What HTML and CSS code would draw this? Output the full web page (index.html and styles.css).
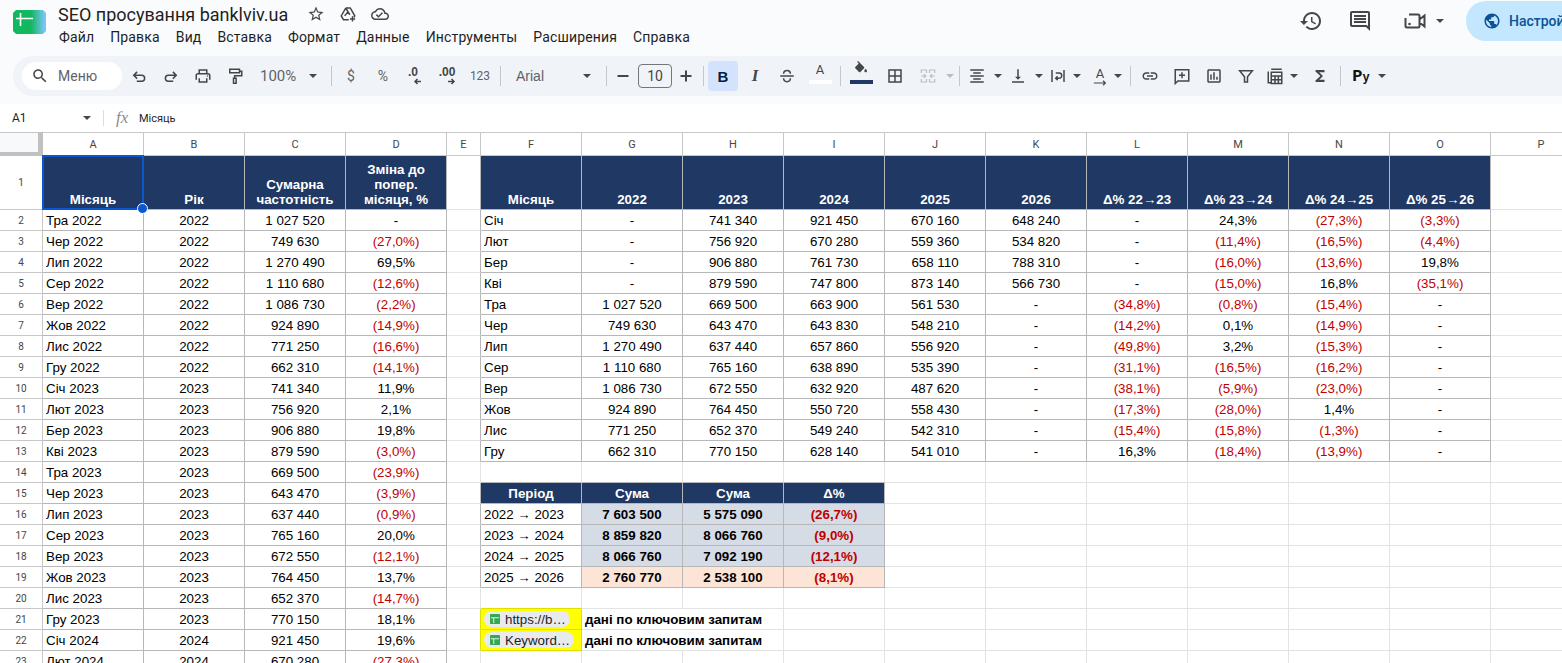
FILE: index.html
```html
<!DOCTYPE html>
<html lang="uk">
<head>
  <meta charset="UTF-8">
  <title>SEO просування banklviv.ua</title>
  <link rel="stylesheet" href="styles.css">
</head>
<body>
  <div class="top">
    <svg class="logo" viewBox="0 0 33 24">
      <defs><linearGradient id="lg" x1="0" x2="1" y1="0" y2="0"><stop offset="0.55" stop-color="#12b85f"/><stop offset="0.95" stop-color="#78c4f5"/></linearGradient></defs>
      <path d="M3 0h27l3 3v18l-3 3H3l-3-3V3z" fill="url(#lg)"/>
      <path d="M3 8.500h17M7.500 3v13" stroke="#fff" stroke-width="1.600" fill="none"/>
    </svg>
    <div class="doc">
      <div class="title-row">
        <span class="title">SEO просування banklviv.ua</span>
        <svg class="ti" viewBox="0 0 24 24"><path d="M22 9.24l-7.19-.62L12 2 9.19 8.63 2 9.24l5.46 4.73L5.82 21 12 17.27 18.18 21l-1.63-7.03L22 9.24zM12 15.4l-3.76 2.27 1-4.28-3.32-2.88 4.38-.38L12 6.1l1.71 4.04 4.38.38-3.32 2.88 1 4.28L12 15.4z"/></svg>
        <svg class="ti" viewBox="0 0 24 24"><path class="ln" d="M9 4h6l6 10.500-1 2M9 4L3 14.500l3 5h7M9 4l3 5M7.500 14.500l4.500-5.500 2.500 4"/><path class="ln" d="M18 15v7M14.500 18.500h7"/></svg>
        <svg class="ti" viewBox="0 0 24 24"><path d="M19.35 10.04C18.67 6.59 15.64 4 12 4 9.11 4 6.6 5.64 5.35 8.04 2.34 8.36 0 10.91 0 14c0 3.31 2.69 6 6 6h13c2.76 0 5-2.24 5-5 0-2.64-2.05-4.78-4.65-4.96zM19 18H6c-2.21 0-4-1.79-4-4 0-2.05 1.53-3.76 3.56-3.97l1.07-.11.5-.95C8.08 7.14 9.94 6 12 6c2.62 0 4.88 1.86 5.39 4.43l.3 1.5 1.53.11c1.56.1 2.78 1.41 2.78 2.96 0 1.65-1.35 3-3 3zm-9-3.82l-2.09-2.09L6.5 13.5 10 17l6.01-6.01-1.41-1.41z"/></svg>
      </div>
      <div class="menu">
        <span>Файл</span><span>Правка</span><span>Вид</span><span>Вставка</span><span>Формат</span><span>Данные</span><span>Инструменты</span><span>Расширения</span><span>Справка</span>
      </div>
    </div>
    <div class="actions">
      <svg class="hi first" viewBox="0 0 24 24"><path d="M13 3c-4.97 0-9 4.03-9 9H1l3.89 3.89.07.14L9 12H6c0-3.87 3.13-7 7-7s7 3.13 7 7-3.13 7-7 7c-1.93 0-3.68-.79-4.94-2.06l-1.42 1.42C8.27 19.99 10.51 21 13 21c4.97 0 9-4.03 9-9s-4.03-9-9-9zm-1 5v5l4.28 2.54.72-1.21-3.5-2.08V8H12z"/></svg>
      <svg class="hi second" viewBox="0 0 24 24"><path d="M21.99 4c0-1.1-.89-2-1.99-2H4c-1.1 0-2 .9-2 2v12c0 1.1.9 2 2 2h14l4 4-.01-18zM20 4v13.17L18.83 16H4V4h16zM6 12h12v2H6zm0-3h12v2H6zm0-3h12v2H6z"/></svg>
      <svg class="hi third" viewBox="0 0 24 24"><path class="ln" d="M6 5.500h9a1.500 1.500 0 0 1 1.500 1.500v10a1.500 1.500 0 0 1-1.500 1.500H4A1.500 1.500 0 0 1 2.500 17V9M16.500 10.500L21.500 6.500v11l-5-4"/><circle cx="6.500" cy="15" r="1.300"/></svg>
      <i class="caret video-caret"></i>
      <div class="share">
        <svg viewBox="0 0 24 24"><path d="M12 2C6.48 2 2 6.48 2 12s4.48 10 10 10 10-4.48 10-10S17.52 2 12 2zm-1 17.93c-3.95-.49-7-3.85-7-7.93 0-.62.08-1.21.21-1.79L9 15v1c0 1.1.9 2 2 2v1.93zm6.9-2.54c-.26-.81-1-1.39-1.9-1.39h-1v-3c0-.55-.45-1-1-1H8v-2h2c.55 0 1-.45 1-1V7h2c1.1 0 2-.9 2-2v-.41c2.93 1.19 5 4.06 5 7.41 0 2.08-.8 3.97-2.1 5.39z"/></svg>
        <span>Настройки</span>
      </div>
    </div>
  </div>

  <div class="toolbar">
    <div class="search">
      <svg viewBox="0 0 24 24"><path d="M15.500 14h-.79l-.28-.27C15.410 12.590 16 11.110 16 9.500 16 5.910 13.090 3 9.500 3S3 5.910 3 9.500 5.910 16 9.500 16c1.610 0 3.090-.59 4.230-1.570l.27.28v.79l5 4.990L20.490 19l-4.990-5zm-6 0C7.010 14 5 11.990 5 9.500S7.010 5 9.500 5 14 7.010 14 9.500 11.990 14 9.500 14z"/></svg>
      <span>Меню</span>
    </div>
    <div class="tool w32 ml1"><svg viewBox="0 0 24 24"><path class="ln" d="M9.500 6.500L5 11l4.500 4.500M5 11h10.500a4 4 0 0 1 0 8H9"/></svg></div>
    <div class="tool w32"><svg viewBox="0 0 24 24"><path class="ln" d="M14.500 6.500L19 11l-4.500 4.500M19 11H8.500a4 4 0 0 0 0 8H15"/></svg></div>
    <div class="tool w32"><svg viewBox="0 0 24 24"><path d="M19 8h-1V3H6v5H5c-1.660 0-3 1.340-3 3v6h4v4h12v-4h4v-6c0-1.660-1.340-3-3-3zM8 5h8v3H8V5zm8 14H8v-4h8v4zm2-2v-2H6v2H4v-6c0-.55.45-1 1-1h14c.55 0 1 .45 1 1v6h-2z"/><circle cx="18" cy="12" r="1"/></svg></div>
    <div class="tool w32"><svg viewBox="0 0 24 24"><path class="ln" d="M5 3h13v4.500H5zM18 5.500h3v6H11.500V15M10 15h3.500v6.500H10z"/></svg></div>
    <div class="zoom"><span>100%</span><i class="caret"></i></div>
    <i class="sep"></i>
    <div class="tool w32 gl">$</div>
    <div class="tool w32 gl">%</div>
    <div class="tool w28 dec"><b>.0</b><svg viewBox="0 0 9 7"><path d="M8 3.500H2M4.500 1L2 3.500 4.500 6"/></svg></div>
    <div class="tool w40 dec"><b>.00</b><svg viewBox="0 0 9 7"><path d="M1 3.500h6M4.500 1L7 3.500 4.500 6"/></svg></div>
    <div class="tool w26 gl num">123</div>
    <i class="sep sp4"></i>
    <div class="font"><span>Arial</span><i class="caret"></i></div>
    <i class="sep"></i>
    <div class="tool w26 sign"><svg viewBox="0 0 16 16"><path class="ln" d="M2.500 8h11"/></svg></div>
    <div class="size">10</div>
    <div class="tool w28 sign"><svg viewBox="0 0 16 16"><path class="ln" d="M2.500 8h11M8 2.500v11"/></svg></div>
    <i class="sep"></i>
    <div class="tool w30 bold ml1">B</div>
    <div class="tool w32 ml1 ital">I</div>
    <div class="tool w32"><svg viewBox="0 0 24 24"><path class="ln" d="M3 12h18M7.500 9c0-3 2-4.500 4.500-4.500S16.500 6 16.500 9M7.500 15c0 3 2 4.500 4.500 4.500s4.500-1.500 4.500-4.500"/></svg></div>
    <div class="tool w34 color"><span>A</span><i class="bar white"></i></div>
    <i class="sep"></i>
    <div class="tool w34 color"><svg viewBox="0 0 24 24"><path d="M16.560 8.940L7.620 0 6.210 1.410l2.380 2.380-5.150 5.150c-.59.59-.59 1.540 0 2.120l5.500 5.500c.29.29.68.44 1.060.44s.77-.15 1.060-.44l5.500-5.500c.59-.58.59-1.530 0-2.120zM19 11.500s-2 2.170-2 3.500c0 1.100.9 2 2 2s2-.9 2-2c0-1.330-2-3.500-2-3.500z"/></svg><i class="bar navy"></i></div>
    <div class="tool w34"><svg viewBox="0 0 24 24"><path d="M3 3v18h18V3H3zm8 16H5v-6h6v6zm0-8H5V5h6v6zm8 8h-6v-6h6v6zm0-8h-6V5h6v6z"/></svg></div>
    <div class="tool w32 off"><svg viewBox="0 0 24 24"><path class="ln" d="M3 8V4h7v4M3 16v4h7v-4M21 8V4h-7v4M21 16v4h-7v-4M3 12h6M6.500 9.500L9 12l-2.500 2.500M21 12h-6M17.500 9.500L15 12l2.500 2.500"/></svg></div>
    <div class="tool w12 off"><i class="caret"></i></div>
    <i class="sep"></i>
    <div class="tool w28"><svg viewBox="0 0 24 24"><path d="M7 15v2h10v-2H7zm-4 6h18v-2H3v2zm0-8h18v-2H3v2zm4-6v2h10V7H7zM3 3v2h18V3H3z"/></svg></div>
    <div class="tool w13"><i class="caret"></i></div>
    <div class="tool w28"><svg viewBox="0 0 24 24"><path d="M16 13h-3V3h-2v10H8l4 4 4-4zM4 19v2h16v-2H4z"/></svg></div>
    <div class="tool w13"><i class="caret"></i></div>
    <div class="tool w26"><svg viewBox="0 0 24 24"><path class="ln" d="M4 4v16M20 4v16M9 8h4.500a3.500 3.500 0 0 1 0 7H9M11.500 12.500L9 15l2.500 2.500"/></svg></div>
    <div class="tool w12"><i class="caret"></i></div>
    <div class="tool w26 ml4 rot"><span>A</span><svg viewBox="0 0 18 6"><path class="ln ln1" d="M2 3h13M12.500 .5L15 3l-2.500 2.500"/></svg></div>
    <div class="tool w10 mr4"><i class="caret"></i></div>
    <i class="sep"></i>
    <div class="tool w32"><svg viewBox="0 0 24 24"><path d="M3.900 12c0-1.710 1.390-3.100 3.100-3.100h4V7H7c-2.760 0-5 2.240-5 5s2.240 5 5 5h4v-1.900H7c-1.710 0-3.100-1.390-3.100-3.100zM8 13h8v-2H8v2zm9-6h-4v1.900h4c1.710 0 3.100 1.390 3.100 3.100s-1.390 3.100-3.100 3.100h-4V17h4c2.760 0 5-2.240 5-5s-2.240-5-5-5z"/></svg></div>
    <div class="tool w32"><svg viewBox="0 0 24 24"><path class="ln" d="M3 3.500h18v15H6.500L3 22zM12 7v8M8 11h8"/></svg></div>
    <div class="tool w32"><svg viewBox="0 0 24 24"><path d="M19 3H5c-1.100 0-2 .9-2 2v14c0 1.100.9 2 2 2h14c1.100 0 2-.9 2-2V5c0-1.100-.9-2-2-2zm0 16H5V5h14v14zM7 10h2v7H7zm4-3h2v10h-2zm4 6h2v4h-2z"/></svg></div>
    <div class="tool w32"><svg viewBox="0 0 24 24"><path class="ln" d="M3.500 5h17L14 13v7h-4v-7z"/></svg></div>
    <div class="tool w26"><svg viewBox="0 0 24 24"><path class="ln" d="M7 3h14M3 6v15h3M7 7h14v15H7zM7 12h14M7 17h14M12 12v10M16.500 12v10"/></svg></div>
    <div class="tool w12"><i class="caret"></i></div>
    <div class="tool w34 ml3"><svg viewBox="0 0 24 24"><path d="M18 4H6v2l6.500 6L6 18v2h12v-3h-7l5-5-5-5h7z"/></svg></div>
    <i class="sep"></i>
    <div class="tool w34 py">P<span>y</span></div>
    <div class="tool w8"><i class="caret"></i></div>
  </div>

  <div class="formula">
    <div class="name">A1</div>
    <i class="caret"></i>
    <i class="fsep"></i>
    <span class="fx">fx</span>
    <span class="ftext">Місяць</span>
  </div>

  <table class="sheet">
    <colgroup><col class="rh"><col span="4" class="cw"><col class="ce"><col span="11" class="cw"></colgroup>
    <tr class="heads"><th class="corner"></th><th>A</th><th>B</th><th>C</th><th>D</th><th>E</th><th>F</th><th>G</th><th>H</th><th>I</th><th>J</th><th>K</th><th>L</th><th>M</th><th>N</th><th>O</th><th>P</th></tr>
    <tr class="r1"><th>1</th><td class="h first-cell">Місяць<div class="sel"><i></i></div></td><td class="h">Рік</td><td class="h">Сумарна<br>частотність</td><td class="h">Зміна до<br>попер.<br>місяця, %</td><td class="e"></td><td class="h">Місяць</td><td class="h">2022</td><td class="h">2023</td><td class="h">2024</td><td class="h">2025</td><td class="h">2026</td><td class="h">Δ% 22→23</td><td class="h">Δ% 23→24</td><td class="h">Δ% 24→25</td><td class="h">Δ% 25→26</td><td></td></tr>
    <tr><th>2</th><td class="g l">Тра 2022</td><td class="g">2022</td><td class="g">1 027 520</td><td class="g">-</td><td class="e"></td><td class="g l">Січ</td><td class="g">-</td><td class="g">741 340</td><td class="g">921 450</td><td class="g">670 160</td><td class="g">648 240</td><td class="g">-</td><td class="g">24,3%</td><td class="g r">(27,3%)</td><td class="g r">(3,3%)</td><td></td></tr>
    <tr><th>3</th><td class="g l">Чер 2022</td><td class="g">2022</td><td class="g">749 630</td><td class="g r">(27,0%)</td><td class="e"></td><td class="g l">Лют</td><td class="g">-</td><td class="g">756 920</td><td class="g">670 280</td><td class="g">559 360</td><td class="g">534 820</td><td class="g">-</td><td class="g r">(11,4%)</td><td class="g r">(16,5%)</td><td class="g r">(4,4%)</td><td></td></tr>
    <tr><th>4</th><td class="g l">Лип 2022</td><td class="g">2022</td><td class="g">1 270 490</td><td class="g">69,5%</td><td class="e"></td><td class="g l">Бер</td><td class="g">-</td><td class="g">906 880</td><td class="g">761 730</td><td class="g">658 110</td><td class="g">788 310</td><td class="g">-</td><td class="g r">(16,0%)</td><td class="g r">(13,6%)</td><td class="g">19,8%</td><td></td></tr>
    <tr><th>5</th><td class="g l">Сер 2022</td><td class="g">2022</td><td class="g">1 110 680</td><td class="g r">(12,6%)</td><td class="e"></td><td class="g l">Кві</td><td class="g">-</td><td class="g">879 590</td><td class="g">747 800</td><td class="g">873 140</td><td class="g">566 730</td><td class="g">-</td><td class="g r">(15,0%)</td><td class="g">16,8%</td><td class="g r">(35,1%)</td><td></td></tr>
    <tr><th>6</th><td class="g l">Вер 2022</td><td class="g">2022</td><td class="g">1 086 730</td><td class="g r">(2,2%)</td><td class="e"></td><td class="g l">Тра</td><td class="g">1 027 520</td><td class="g">669 500</td><td class="g">663 900</td><td class="g">561 530</td><td class="g">-</td><td class="g r">(34,8%)</td><td class="g r">(0,8%)</td><td class="g r">(15,4%)</td><td class="g">-</td><td></td></tr>
    <tr><th>7</th><td class="g l">Жов 2022</td><td class="g">2022</td><td class="g">924 890</td><td class="g r">(14,9%)</td><td class="e"></td><td class="g l">Чер</td><td class="g">749 630</td><td class="g">643 470</td><td class="g">643 830</td><td class="g">548 210</td><td class="g">-</td><td class="g r">(14,2%)</td><td class="g">0,1%</td><td class="g r">(14,9%)</td><td class="g">-</td><td></td></tr>
    <tr><th>8</th><td class="g l">Лис 2022</td><td class="g">2022</td><td class="g">771 250</td><td class="g r">(16,6%)</td><td class="e"></td><td class="g l">Лип</td><td class="g">1 270 490</td><td class="g">637 440</td><td class="g">657 860</td><td class="g">556 920</td><td class="g">-</td><td class="g r">(49,8%)</td><td class="g">3,2%</td><td class="g r">(15,3%)</td><td class="g">-</td><td></td></tr>
    <tr><th>9</th><td class="g l">Гру 2022</td><td class="g">2022</td><td class="g">662 310</td><td class="g r">(14,1%)</td><td class="e"></td><td class="g l">Сер</td><td class="g">1 110 680</td><td class="g">765 160</td><td class="g">638 890</td><td class="g">535 390</td><td class="g">-</td><td class="g r">(31,1%)</td><td class="g r">(16,5%)</td><td class="g r">(16,2%)</td><td class="g">-</td><td></td></tr>
    <tr><th>10</th><td class="g l">Січ 2023</td><td class="g">2023</td><td class="g">741 340</td><td class="g">11,9%</td><td class="e"></td><td class="g l">Вер</td><td class="g">1 086 730</td><td class="g">672 550</td><td class="g">632 920</td><td class="g">487 620</td><td class="g">-</td><td class="g r">(38,1%)</td><td class="g r">(5,9%)</td><td class="g r">(23,0%)</td><td class="g">-</td><td></td></tr>
    <tr><th>11</th><td class="g l">Лют 2023</td><td class="g">2023</td><td class="g">756 920</td><td class="g">2,1%</td><td class="e"></td><td class="g l">Жов</td><td class="g">924 890</td><td class="g">764 450</td><td class="g">550 720</td><td class="g">558 430</td><td class="g">-</td><td class="g r">(17,3%)</td><td class="g r">(28,0%)</td><td class="g">1,4%</td><td class="g">-</td><td></td></tr>
    <tr><th>12</th><td class="g l">Бер 2023</td><td class="g">2023</td><td class="g">906 880</td><td class="g">19,8%</td><td class="e"></td><td class="g l">Лис</td><td class="g">771 250</td><td class="g">652 370</td><td class="g">549 240</td><td class="g">542 310</td><td class="g">-</td><td class="g r">(15,4%)</td><td class="g r">(15,8%)</td><td class="g r">(1,3%)</td><td class="g">-</td><td></td></tr>
    <tr><th>13</th><td class="g l">Кві 2023</td><td class="g">2023</td><td class="g">879 590</td><td class="g r">(3,0%)</td><td class="e"></td><td class="g l">Гру</td><td class="g">662 310</td><td class="g">770 150</td><td class="g">628 140</td><td class="g">541 010</td><td class="g">-</td><td class="g">16,3%</td><td class="g r">(18,4%)</td><td class="g r">(13,9%)</td><td class="g">-</td><td></td></tr>
    <tr><th>14</th><td class="g l">Тра 2023</td><td class="g">2023</td><td class="g">669 500</td><td class="g r">(23,9%)</td><td></td><td class="bb"></td><td class="bb"></td><td class="bb"></td><td class="bb"></td><td></td><td></td><td></td><td></td><td></td><td></td><td></td></tr>
    <tr class="sub"><th>15</th><td class="g l">Чер 2023</td><td class="g">2023</td><td class="g">643 470</td><td class="g r">(3,9%)</td><td class="e"></td><td class="h">Період</td><td class="h">Сума</td><td class="h">Сума</td><td class="h">Δ%</td><td></td><td></td><td></td><td></td><td></td><td></td><td></td></tr>
    <tr><th>16</th><td class="g l">Лип 2023</td><td class="g">2023</td><td class="g">637 440</td><td class="g r">(0,9%)</td><td class="e"></td><td class="g l">2022 → 2023</td><td class="g s">7 603 500</td><td class="g s">5 575 090</td><td class="g s r">(26,7%)</td><td></td><td></td><td></td><td></td><td></td><td></td><td></td></tr>
    <tr><th>17</th><td class="g l">Сер 2023</td><td class="g">2023</td><td class="g">765 160</td><td class="g">20,0%</td><td class="e"></td><td class="g l">2023 → 2024</td><td class="g s">8 859 820</td><td class="g s">8 066 760</td><td class="g s r">(9,0%)</td><td></td><td></td><td></td><td></td><td></td><td></td><td></td></tr>
    <tr><th>18</th><td class="g l">Вер 2023</td><td class="g">2023</td><td class="g">672 550</td><td class="g r">(12,1%)</td><td class="e"></td><td class="g l">2024 → 2025</td><td class="g s">8 066 760</td><td class="g s">7 092 190</td><td class="g s r">(12,1%)</td><td></td><td></td><td></td><td></td><td></td><td></td><td></td></tr>
    <tr><th>19</th><td class="g l">Жов 2023</td><td class="g">2023</td><td class="g">764 450</td><td class="g">13,7%</td><td class="e"></td><td class="g l">2025 → 2026</td><td class="g s p">2 760 770</td><td class="g s p">2 538 100</td><td class="g s p r">(8,1%)</td><td></td><td></td><td></td><td></td><td></td><td></td><td></td></tr>
    <tr><th>20</th><td class="g l">Лис 2023</td><td class="g">2023</td><td class="g">652 370</td><td class="g r">(14,7%)</td><td></td><td class="ybt"></td><td></td><td></td><td></td><td></td><td></td><td></td><td></td><td></td><td></td><td></td></tr>
    <tr><th>21</th><td class="g l">Гру 2023</td><td class="g">2023</td><td class="g">770 150</td><td class="g">18,1%</td><td class="ye"></td><td class="y"><span class="chip"><svg viewBox="0 0 12 12"><rect width="12" height="12" rx="1" fill="#34a853"/><path d="M1 4.500h10M4.500 4.500V11" stroke="#fff" fill="none"/></svg><span>https://b…</span></span></td><td colspan="2" class="note">дані по ключовим запитам</td><td></td><td></td><td></td><td></td><td></td><td></td><td></td><td></td></tr>
    <tr><th>22</th><td class="g l">Січ 2024</td><td class="g">2024</td><td class="g">921 450</td><td class="g">19,6%</td><td class="ye"></td><td class="y"><span class="chip"><svg viewBox="0 0 12 12"><rect width="12" height="12" rx="1" fill="#34a853"/><path d="M1 4.500h10M4.500 4.500V11" stroke="#fff" fill="none"/></svg><span>Keyword…</span></span></td><td colspan="2" class="note">дані по ключовим запитам</td><td></td><td></td><td></td><td></td><td></td><td></td><td></td><td></td></tr>
    <tr><th>23</th><td class="g l">Лют 2024</td><td class="g">2024</td><td class="g">670 280</td><td class="g r">(27,3%)</td><td></td><td></td><td></td><td></td><td></td><td></td><td></td><td></td><td></td><td></td><td></td><td></td></tr>
  </table>
</body>
</html>
```

FILE: styles.css
```css
html, body {
  margin: 0;
  height: 663px;
  overflow: hidden;
  background: #f9fbfd;
  font-family: Roboto, sans-serif;
  color: #1f1f1f;
}

svg {
  display: block;
  fill: #444746;
}

.ln {
  fill: none;
  stroke: #444746;
  stroke-width: 2;
}

.ln1 { stroke-width: 1.300; }

.caret {
  display: block;
  width: 0;
  height: 0;
  border: 4px solid transparent;
  border-top-color: #444746;
  border-bottom: 0;
}

/* title bar */
.top {
  display: flex;
  height: 56px;
  overflow: hidden;
}

.logo {
  flex: 0 0 33px;
  width: 33px;
  height: 24px;
  margin: 10px 12px 0 13px;
}

.doc {
  flex: 0 0 1241px;
}

.title-row {
  display: flex;
  align-items: center;
  height: 28px;
}

.title {
  font-size: 18px;
  width: 249px;
  white-space: nowrap;
}

.ti {
  width: 18px;
  height: 18px;
  margin-right: 14px;
}

.menu {
  display: flex;
  gap: 16px;
  padding-left: 1px;
  font-size: 14px;
  letter-spacing: .15px;
  line-height: 18px;
}

.actions {
  display: flex;
  align-items: flex-start;
}

.hi {
  width: 24px;
  height: 24px;
  margin-top: 9px;
}

.first { margin-left: 0; }
.second { margin-left: 25px; }
.third { margin-left: 31px; }
.video-caret { margin: 19px 0 0 9px; }

.share {
  display: flex;
  align-items: center;
  flex: 0 0 170px;
  height: 40px;
  margin: 1px 0 0 22px;
  padding-left: 17px;
  border-radius: 20px;
  background: #c2e7ff;
  font-size: 14px;
  font-weight: 500;
  color: #0b5394;
}

.share svg {
  width: 18px;
  height: 18px;
  margin-right: 8px;
  fill: #0b5394;
}

/* toolbar */
.toolbar {
  display: flex;
  align-items: center;
  height: 40px;
  margin-left: 13px;
  padding-left: 9px;
  border-radius: 20px 0 0 20px;
  background: #f0f4f9;
}

.search {
  display: flex;
  align-items: center;
  flex: 0 0 100px;
  height: 28px;
  box-sizing: border-box;
  padding-left: 9px;
  border-radius: 14px;
  background: #fff;
  font-size: 14px;
  color: #5f6368;
}

.search svg {
  width: 18px;
  height: 18px;
  margin-right: 9px;
}

.tool {
  display: flex;
  align-items: center;
  justify-content: center;
  flex: none;
  height: 30px;
  font-size: 13px;
  color: #444746;
}

.tool svg {
  width: 18px;
  height: 18px;
}

.w8 { width: 8px; }
.w10 { width: 10px; }
.w12 { width: 12px; }
.w13 { width: 13px; }
.w26 { width: 26px; }
.w28 { width: 28px; }
.w30 { width: 30px; }
.w32 { width: 32px; }
.w34 { width: 34px; }
.w40 { width: 40px; }
.ml1 { margin-left: 1px; }
.ml3 { margin-left: 3px; }
.ml4 { margin-left: 4px; }
.mr4 { margin-right: 4px; }

.sep {
  flex: none;
  width: 1px;
  height: 20px;
  margin: 0 3px;
  background: #c7c7c7;
}

.sp4 { margin-left: 7px; }

.zoom, .font {
  display: flex;
  align-items: center;
  justify-content: space-between;
  flex: none;
  box-sizing: border-box;
  font-size: 14px;
  color: #5f6368;
}

.zoom {
  width: 77px;
  padding: 0 11px 0 9px;
  font-size: 15px;
}

.font {
  width: 99px;
  padding: 0 12px;
  font-family: "Liberation Sans", sans-serif;
}

.gl { color: #5f6368; font-size: 14px; }
.num { font-size: 12px; }

.dec {
  flex-direction: column;
  font-family: "Liberation Sans", sans-serif;
  font-size: 12px;
  line-height: 11px;
}

.dec svg {
  width: 9px;
  height: 7px;
  margin-left: 9px;
  fill: none;
  stroke: #444746;
  stroke-width: 1.500;
}

.sign svg {
  width: 16px;
  height: 16px;
}

.size {
  flex: none;
  width: 34px;
  height: 24px;
  box-sizing: border-box;
  margin-left: 2px;
  border: 1px solid #747775;
  border-radius: 4px;
  font-size: 14px;
  line-height: 22px;
  text-align: center;
  color: #444746;
}

.bold {
  border-radius: 4px;
  background: #d3e3fd;
  font-family: "Liberation Sans", sans-serif;
  font-weight: bold;
  font-size: 15px;
  color: #041e49;
}

.ital {
  font-family: "Liberation Serif", serif;
  font-style: italic;
  font-weight: bold;
  font-size: 17px;
}

.color {
  flex-direction: column;
  justify-content: flex-start;
  font-size: 13px;
  line-height: 18px;
}

.color svg {
  width: 16px;
  height: 16px;
  margin-bottom: 2px;
}

.bar {
  width: 23px;
  height: 4px;
  margin-top: 1px;
}

.white { background: #fff; }
.navy { background: #1f3864; }

.off svg .ln { stroke: #b8bcc0; stroke-width: 1.500; }
.off .caret { border-top-color: #b8bcc0; }

.rot {
  flex-direction: column;
  font-size: 13px;
  line-height: 13px;
}

.tool.rot svg {
  width: 16px;
  height: 6px;
}

.py {
  font-family: "Liberation Mono", monospace;
  font-weight: bold;
  font-size: 17px;
  color: #111;
}

.py span { font-size: 12px; margin-top: 3px; }

/* formula bar */
.formula {
  display: flex;
  align-items: center;
  height: 28px;
  margin-top: 8px;
  background: #fff;
  font-size: 12px;
}

.name {
  width: 71px;
  padding-left: 12px;
}

.fsep {
  width: 1px;
  height: 16px;
  margin: 0 12px;
  background: #dadce0;
}

.fx {
  width: 23px;
  font-family: "Liberation Serif", serif;
  font-style: italic;
  font-size: 17px;
  color: #8a8d90;
}

.ftext { font-size: 11px; }

/* grid */
.sheet {
  table-layout: fixed;
  width: 1592px;
  border-collapse: separate;
  border-spacing: 0;
  background: #fff;
  font-family: "Liberation Sans", Arial, sans-serif;
  font-size: 13.33px;
  color: #000;
}

.rh { width: 43px; }
.cw { width: 101px; }
.ce { width: 34px; }

.sheet tr { height: 21px; }
.sheet .heads { height: 24px; }
.sheet .r1 { height: 54px; }

th {
  box-sizing: border-box;
  padding: 0;
  border-right: 1px solid #c7c7c7;
  border-bottom: 1px solid #c7c7c7;
  font-family: Roboto, sans-serif;
  font-size: 10px;
  font-weight: 400;
  color: #444746;
  background: #fff;
}

.heads th {
  border-top: 1px solid #c7c7c7;
  font-size: 11px;
}

.corner {
  background: #f8f9fa;
  border-right: 5px solid #c0c0c0 !important;
  border-bottom: 4px solid #c0c0c0 !important;
}

td {
  box-sizing: border-box;
  height: 21px;
  padding: 0 3px 2px;
  overflow: hidden;
  white-space: nowrap;
  vertical-align: bottom;
  line-height: 15px;
  text-align: center;
  border-right: 1px solid #e2e3e3;
  border-bottom: 1px solid #e2e3e3;
}

td.g, td.h { border-color: #b7b7b7; }
td.e { border-right-color: #b7b7b7; }
td.bb { border-bottom-color: #b7b7b7; }
td.l { text-align: left; }
td.r { color: #c00000; }

td.h {
  background: #1f3864;
  color: #fff;
  font-weight: bold;
}

td.s {
  background: #d6dce5;
  font-weight: bold;
}

td.p { background: #fce4d6; }

td.first-cell {
  position: relative;
  overflow: visible;
}

/* A1 selection */
.sel {
  position: absolute;
  top: -1px;
  left: -1px;
  right: -1px;
  bottom: -1px;
  border: 2px solid #0b57d0;
  pointer-events: none;
}

.sel i {
  position: absolute;
  right: -6px;
  bottom: -6px;
  width: 9px;
  height: 9px;
  border-radius: 50%;
  background: #0b57d0;
  border: 1px solid #fff;
}

td.y {
  background: #ffff00;
  border-color: #dede00;
  text-align: left;
}

td.ybt { border-bottom-color: #dede00; }
td.ye { border-right-color: #dede00; }

.chip {
  display: inline-flex;
  align-items: center;
  height: 16px;
  padding: 0 4px 0 6px;
  border-radius: 8px;
  background: #e8eaed;
  vertical-align: bottom;
  color: #1f1f1f;
}

.chip svg {
  width: 10px;
  height: 10px;
  margin-right: 5px;
}

td.note {
  text-align: left;
  font-weight: bold;
}
```
